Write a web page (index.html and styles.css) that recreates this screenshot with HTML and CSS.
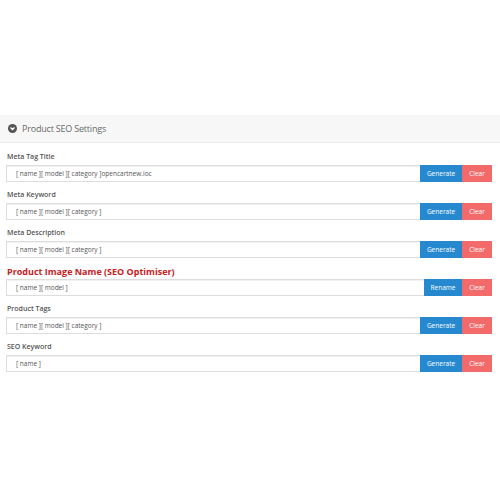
FILE: index.html
```html
<!DOCTYPE html>
<html lang="en">
<head>
<meta charset="UTF-8">
<title>Product SEO Settings</title>
<link rel="stylesheet" href="styles.css">
</head>
<body>
<div class="panel">
  <div class="panel-heading">
    <svg class="panel-icon" width="9" height="9" viewBox="0 0 10 10">
      <circle cx="5" cy="5" r="5" fill="#555"/>
      <path d="M2.8 4 L5 6.2 L7.2 4" fill="none" stroke="#fff" stroke-width="1.5"/>
    </svg>
    <span>Product SEO Settings</span>
  </div>
  <div class="panel-body">
    <div class="field">
      <div class="field-label">Meta Tag Title</div>
      <div class="input-group">
        <div class="input">[ name ][ model ][ category ]opencartnew.loc</div>
        <div class="btn btn-generate">Generate</div>
        <div class="btn btn-clear">Clear</div>
      </div>
    </div>
    <div class="field">
      <div class="field-label">Meta Keyword</div>
      <div class="input-group">
        <div class="input">[ name ][ model ][ category ]</div>
        <div class="btn btn-generate">Generate</div>
        <div class="btn btn-clear">Clear</div>
      </div>
    </div>
    <div class="field">
      <div class="field-label">Meta Description</div>
      <div class="input-group">
        <div class="input">[ name ][ model ][ category ]</div>
        <div class="btn btn-generate">Generate</div>
        <div class="btn btn-clear">Clear</div>
      </div>
    </div>
    <div class="field">
      <div class="field-label field-label-red">Product Image Name (SEO Optimiser)</div>
      <div class="input-group">
        <div class="input">[ name ][ model ]</div>
        <div class="btn btn-rename">Rename</div>
        <div class="btn btn-clear">Clear</div>
      </div>
    </div>
    <div class="field">
      <div class="field-label">Product Tags</div>
      <div class="input-group">
        <div class="input">[ name ][ model ][ category ]</div>
        <div class="btn btn-generate">Generate</div>
        <div class="btn btn-clear">Clear</div>
      </div>
    </div>
    <div class="field">
      <div class="field-label">SEO Keyword</div>
      <div class="input-group">
        <div class="input">[ name ]</div>
        <div class="btn btn-generate">Generate</div>
        <div class="btn btn-clear">Clear</div>
      </div>
    </div>
  </div>
</div>
</body>
</html>
```
FILE: styles.css
```css
body {
  margin: 0;
  background: #fff;
  font-family: "Open Sans", "Liberation Sans", sans-serif;
}
.panel {
  padding-top: 115px;
}
.panel-heading {
  display: flex;
  align-items: center;
  gap: 5px;
  height: 27px;
  padding-left: 8px;
  background: #f7f7f7;
  border-bottom: 1px solid #e8e8e8;
  font-size: 9px;
  letter-spacing: -0.2px;
  color: #6a6a6a;
}
.panel-icon {
  display: block;
}
.panel-body {
  padding: 9px 8px 0 6px;
}
.field {
  margin-bottom: 8px;
}
.field-label {
  font-size: 7px;
  font-weight: 600;
  color: #555;
  line-height: 10px;
  margin-bottom: 3px;
  padding-left: 1px;
}
.field-label-red {
  font-size: 9px;
  font-weight: bold;
  line-height: 11px;
  margin-bottom: 2px;
  color: #c8201f;
}
.input-group {
  display: flex;
  height: 17px;
}
.input {
  flex: 1;
  display: flex;
  align-items: center;
  padding-left: 9px;
  border: 1px solid #ddd;
  border-right: none;
  box-shadow: inset 0 1px 1px rgba(0,0,0,.06);
  font-size: 6.5px;
  color: #555;
}
.btn {
  display: flex;
  align-items: center;
  justify-content: center;
  color: #fff;
  font-size: 6.5px;
}
.btn-generate {
  width: 42px;
  background: #2689d0;
}
.btn-rename {
  width: 38px;
  background: #2689d0;
}
.btn-clear {
  width: 30px;
  background: #f26a6a;
}
```
